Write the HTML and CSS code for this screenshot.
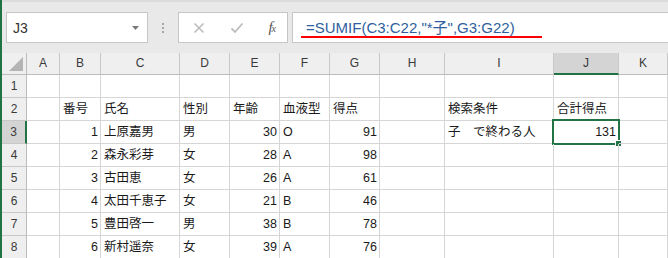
FILE: index.html
```html
<!DOCTYPE html>
<html lang="ja">
<head>
  <meta charset="UTF-8" />
  <title>SUMIF - Excel</title>
  <link rel="stylesheet" href="styles.css">
</head>
<body>

  <div class="toolbar">
    <div class="namebox">
      <span>J3</span>
      <svg class="arrow" width="7" height="4" viewBox="0 0 7 4"><polygon points="0,0 7,0 3.5,4" fill="#7a7a7a"/></svg>
    </div>
    <div class="dots"><i></i><i></i><i></i></div>
    <div class="fxbtns">
      <svg width="12" height="12" viewBox="0 0 12 12"><path d="M1.5 1.5 L10.5 10.5 M10.5 1.5 L1.5 10.5" stroke="#bdbdbd" stroke-width="1.6" fill="none"/></svg>
      <svg width="14" height="12" viewBox="0 0 14 12"><path d="M1.5 6.5 L5 10 L12.5 1.5" stroke="#bdbdbd" stroke-width="1.8" fill="none"/></svg>
      <span class="fx">f<sub>x</sub></span>
    </div>
    <div class="formula">
      <span class="mark">=SUMIF(C3:C22,"*子",G3:G22)</span>
    </div>
  </div>

  <div class="sheet">
    <!-- column headers -->
    <div class="c corner"><svg width="24" height="21" viewBox="0 0 24 21"><polygon points="7,18 21,18 21,4" fill="#b4b4b4"/></svg></div>
    <div class="c h">A</div><div class="c h">B</div><div class="c h">C</div><div class="c h">D</div>
    <div class="c h">E</div><div class="c h">F</div><div class="c h">G</div><div class="c h">H</div>
    <div class="c h">I</div><div class="c h on">J</div><div class="c h">K</div>

    <!-- row 1 -->
    <div class="c n">1</div>
    <div class="c"></div><div class="c"></div><div class="c"></div><div class="c"></div><div class="c"></div>
    <div class="c"></div><div class="c"></div><div class="c"></div><div class="c"></div><div class="c"></div><div class="c"></div>

    <!-- row 2 -->
    <div class="c n">2</div>
    <div class="c"></div><div class="c">番号</div><div class="c">氏名</div><div class="c">性別</div><div class="c">年齢</div>
    <div class="c">血液型</div><div class="c">得点</div><div class="c"></div><div class="c">検索条件</div><div class="c">合計得点</div><div class="c"></div>

    <!-- row 3 -->
    <div class="c n on">3</div>
    <div class="c"></div><div class="c r">1</div><div class="c">上原嘉男</div><div class="c">男</div><div class="c r">30</div>
    <div class="c">O</div><div class="c r">91</div><div class="c"></div><div class="c">子　で終わる人</div>
    <div class="c r active">131<span class="sel"></span><span class="handle"></span></div><div class="c"></div>

    <!-- row 4 -->
    <div class="c n">4</div>
    <div class="c"></div><div class="c r">2</div><div class="c">森永彩芽</div><div class="c">女</div><div class="c r">28</div>
    <div class="c">A</div><div class="c r">98</div><div class="c"></div><div class="c"></div><div class="c"></div><div class="c"></div>

    <!-- row 5 -->
    <div class="c n">5</div>
    <div class="c"></div><div class="c r">3</div><div class="c">古田恵</div><div class="c">女</div><div class="c r">26</div>
    <div class="c">A</div><div class="c r">61</div><div class="c"></div><div class="c"></div><div class="c"></div><div class="c"></div>

    <!-- row 6 -->
    <div class="c n">6</div>
    <div class="c"></div><div class="c r">4</div><div class="c">太田千恵子</div><div class="c">女</div><div class="c r">21</div>
    <div class="c">B</div><div class="c r">46</div><div class="c"></div><div class="c"></div><div class="c"></div><div class="c"></div>

    <!-- row 7 -->
    <div class="c n">7</div>
    <div class="c"></div><div class="c r">5</div><div class="c">豊田啓一</div><div class="c">男</div><div class="c r">38</div>
    <div class="c">B</div><div class="c r">78</div><div class="c"></div><div class="c"></div><div class="c"></div><div class="c"></div>

    <!-- row 8 -->
    <div class="c n">8</div>
    <div class="c"></div><div class="c r">6</div><div class="c">新村遥奈</div><div class="c">女</div><div class="c r">39</div>
    <div class="c">A</div><div class="c r">76</div><div class="c"></div><div class="c"></div><div class="c"></div><div class="c"></div>
  </div>

</body>
</html>
```

FILE: styles.css
```css
body {
  margin: 0;
  height: 258px;
  overflow: hidden;
  border-left: 2px solid #217346;
  font-family: "Liberation Sans", "Noto Sans CJK JP", sans-serif;
  background: #fff;
  color: #1a1a1a;
}

.toolbar {
  display: flex;
  align-items: flex-start;
  height: 53px;
  padding: 12px 0 10px 4px;
  box-sizing: border-box;
  background: #e9e9e9;
  border-top: 2px solid #dcdcdc;
  padding-top: 10px;
}

.namebox {
  width: 142px;
  height: 31px;
  box-sizing: border-box;
  background: #fff;
  border: 1px solid #c6c6c6;
  display: flex;
  align-items: center;
  justify-content: space-between;
  padding: 1px 8px 0 6px;
  font-size: 14px;
  color: #333;
}

.dots {
  width: 30px;
  height: 31px;
  display: flex;
  flex-direction: column;
  align-items: center;
  justify-content: center;
  gap: 2px;
}

.dots i {
  width: 2px;
  height: 2px;
  background: #a6a6a6;
}

.fxbtns {
  width: 110px;
  height: 31px;
  box-sizing: border-box;
  background: #fff;
  border: 1px solid #c6c6c6;
  display: flex;
  align-items: center;
  justify-content: space-between;
  padding: 0 11px 0 14px;
}

.fx {
  font-family: "Liberation Serif", serif;
  font-style: italic;
  font-size: 15px;
  color: #555;
}

.fx sub {
  font-size: 10px;
  vertical-align: 0;
  margin-left: -1px;
}

.formula {
  flex: 1;
  height: 31px;
  margin-left: 4px;
  box-sizing: border-box;
  background: #fff;
  border: 1px solid #c6c6c6;
  border-right: none;
  display: flex;
  align-items: center;
  padding-left: 8px;
}

.mark {
  display: inline-block;
  font-size: 15px;
  line-height: 17px;
  padding: 0 27px 0 5px;
  margin-top: 2px;
  border-bottom: 2px solid #ff0000;
  color: #2f5f9e;
}

.sheet {
  display: grid;
  grid-template-columns: 25px 33px 41px 79px 50px 50px 50px 50px 65px 109px 65px 1fr;
  grid-template-rows: 22px;
  grid-auto-rows: 23px;
}

.c {
  position: relative;
  box-sizing: border-box;
  border-right: 1px solid #d6d6d6;
  border-bottom: 1px solid #d6d6d6;
  padding: 1px 3px 0;
  font-size: 12.5px;
  line-height: 21px;
  white-space: nowrap;
}

.r {
  text-align: right;
  padding-right: 2px;
}

.corner,
.h,
.n {
  background: #efefef;
  border-color: #c8c8c8;
  text-align: center;
  font-size: 12px;
  color: #3a3a3a;
  padding: 0;
}

.corner {
  border-right-color: #bdbdbd;
  border-bottom-color: #bdbdbd;
}

.h {
  line-height: 21px;
  border-bottom-color: #bdbdbd;
}

.n {
  border-right-color: #bdbdbd;
  line-height: 23px;
}

.h.on {
  background: #d4d4d4;
  border-bottom: 2px solid #217346;
  line-height: 20px;
}

.n.on {
  background: #d4d4d4;
  border-right: 2px solid #217346;
}

.active {
  overflow: visible;
}

.sel {
  position: absolute;
  left: -2px;
  top: -2px;
  width: 68px;
  height: 26px;
  box-sizing: border-box;
  border: 2px solid #217346;
}

.handle {
  position: absolute;
  left: 61px;
  top: 19px;
  width: 5px;
  height: 5px;
  background: #217346;
  border: 1px solid #fff;
}
```
